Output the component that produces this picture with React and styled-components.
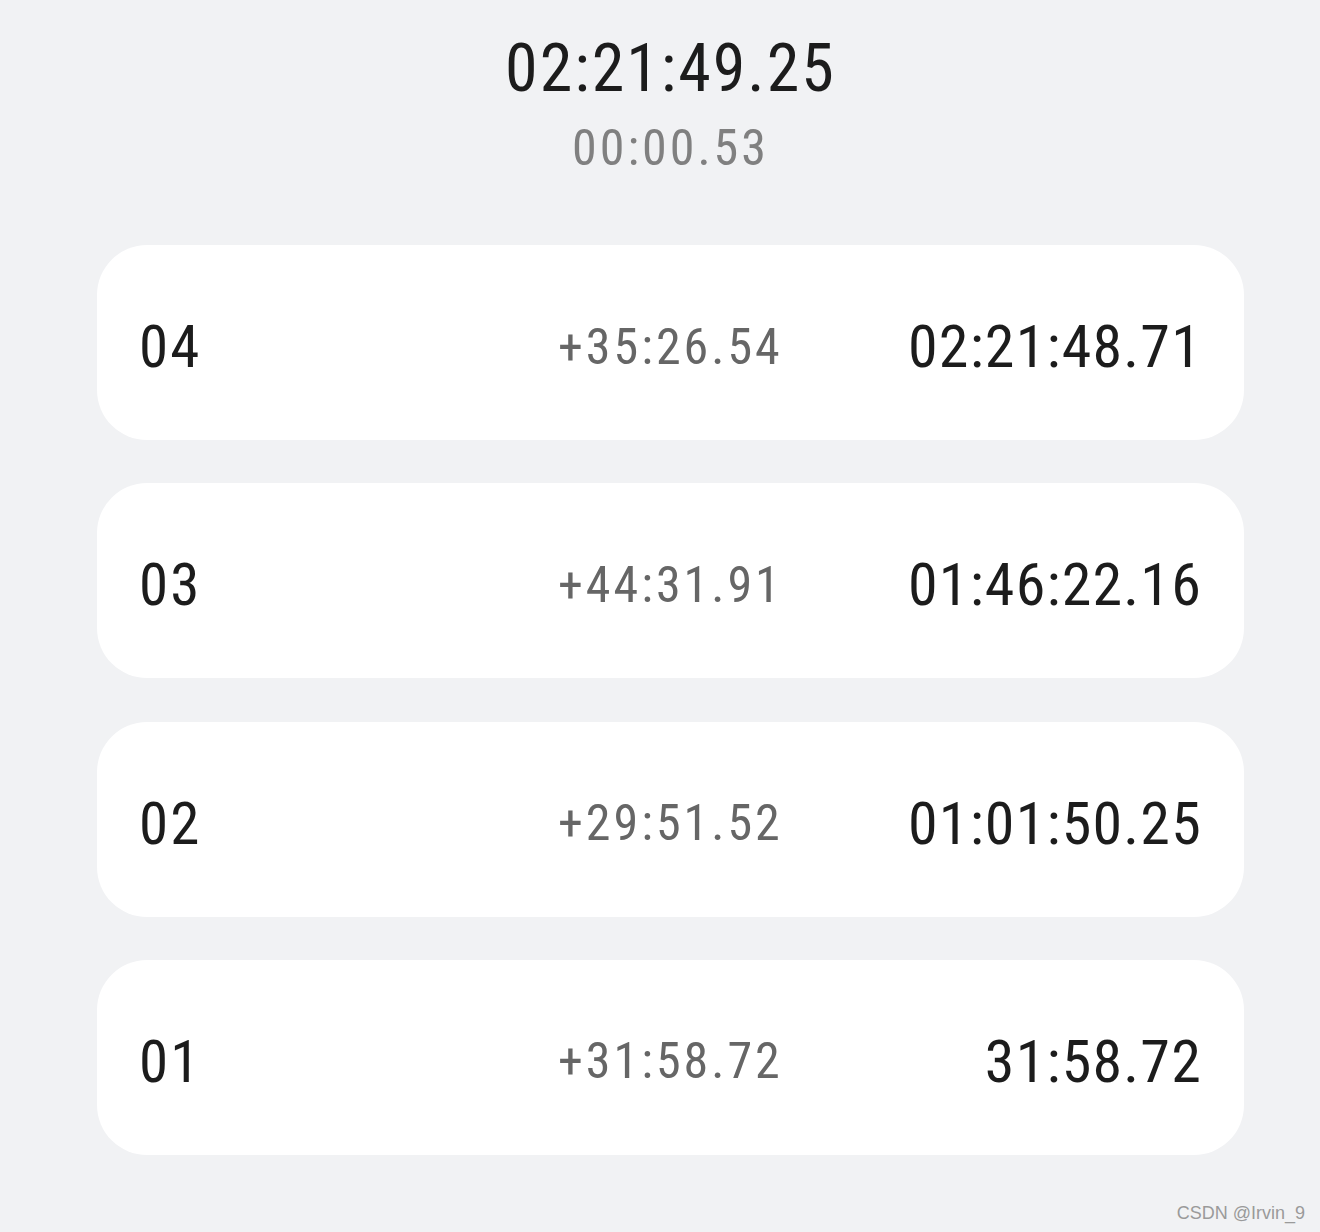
import styled, { createGlobalStyle } from 'styled-components';

const GlobalStyle = createGlobalStyle`
  html, body {
    margin: 0;
    padding: 0;
    background: #f1f2f4;
  }
`;

const Page = styled.div`
  position: relative;
  width: 1320px;
  height: 1232px;
  box-sizing: border-box;
  padding: 0 76px 0 97px;
  font-family: 'Roboto Condensed', Roboto, sans-serif;
  overflow: hidden;
`;

const Header = styled.header`
  display: flex;
  flex-direction: column;
  align-items: center;
  padding-top: 36px;
  height: 245px;
  box-sizing: border-box;
`;

const Total = styled.div`
  font-size: 66px;
  line-height: 66px;
  letter-spacing: 2px;
  color: #1c1c1c;
`;

const Current = styled.div`
  font-size: 50px;
  line-height: 50px;
  letter-spacing: 3px;
  color: #808080;
  margin-top: 21px;
`;

const LapList = styled.div`
  display: flex;
  flex-direction: column;
  gap: 43.3px;
`;

const LapCard = styled.div`
  height: 195px;
  background: #fff;
  border-radius: 50px;
  box-sizing: border-box;
  padding: 8px 42px 0 42px;
  display: grid;
  grid-template-columns: 419px 1fr auto;
  align-items: center;
`;

const LapNo = styled.span`
  font-size: 59px;
  letter-spacing: 2px;
  color: #1c1c1c;
`;

const Split = styled.span`
  font-size: 50px;
  letter-spacing: 3px;
  color: #666;
`;

const Elapsed = styled.span`
  font-size: 60px;
  letter-spacing: 1.2px;
  color: #1c1c1c;
  justify-self: end;
`;

const Watermark = styled.div`
  position: absolute;
  right: 15px;
  bottom: 8px;
  font-family: 'Liberation Sans', Arial, sans-serif;
  font-size: 18px;
  color: #9a9a9a;
`;

const laps = [
  { no: '04', split: '+35:26.54', total: '02:21:48.71' },
  { no: '03', split: '+44:31.91', total: '01:46:22.16' },
  { no: '02', split: '+29:51.52', total: '01:01:50.25' },
  { no: '01', split: '+31:58.72', total: '31:58.72' },
];

export default function App() {
  return (
    <>
      <GlobalStyle />
      <Page>
        <Header>
          <Total>02:21:49.25</Total>
          <Current>00:00.53</Current>
        </Header>
        <LapList>
          {laps.map((lap) => (
            <LapCard key={lap.no}>
              <LapNo>{lap.no}</LapNo>
              <Split>{lap.split}</Split>
              <Elapsed>{lap.total}</Elapsed>
            </LapCard>
          ))}
        </LapList>
        <Watermark>CSDN @Irvin_9</Watermark>
      </Page>
    </>
  );
}
